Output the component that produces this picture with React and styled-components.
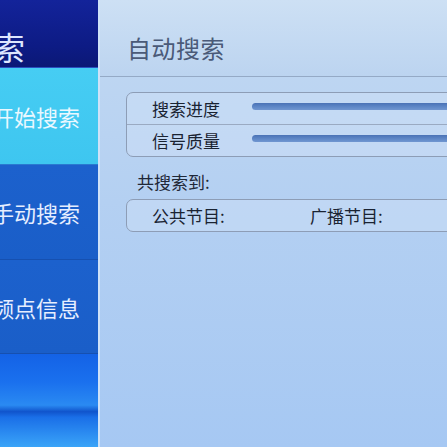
import React from 'react'
import styled, { createGlobalStyle } from 'styled-components'

const GlobalStyle = createGlobalStyle`
  html, body {
    margin: 0;
    padding: 0;
    background: #0e1c86;
  }
  body {
    font-family: 'Noto Sans CJK SC', 'Noto Sans', sans-serif;
  }
`

const Screen = styled.div`
  display: flex;
  width: 447px;
  height: 447px;
  overflow: hidden;
`

const Sidebar = styled.div`
  display: flex;
  flex-direction: column;
  width: 98px;
  flex-shrink: 0;
  overflow: hidden;
`

const SideHeader = styled.div`
  height: 68px;
  box-sizing: border-box;
  display: flex;
  align-items: center;
  justify-content: flex-end;
  padding: 24px 73px 0 0;
  background: linear-gradient(180deg, #13239a 0%, #0d1b84 70%, #0b1876 100%);
  border-bottom: 1px solid #2a4fc0;
  color: #dde6ff;
  font-size: 32px;
  white-space: nowrap;
`

const MenuItem = styled.div`
  height: ${({ $h }) => $h}px;
  display: flex;
  align-items: center;
  justify-content: flex-end;
  padding-right: 18px;
  font-size: 22px;
  white-space: nowrap;
  color: ${({ $active }) => ($active ? '#eaf8ff' : '#e6eeff')};
  background: ${({ $active }) =>
    $active
      ? 'linear-gradient(180deg, #46cdf3 0%, #3ec6f0 100%)'
      : 'linear-gradient(180deg, #1c61cd 0%, #1a5ec8 100%)'};
  border-bottom: 1px solid ${({ $active }) => ($active ? '#2a7ad0' : '#1650b0')};
`

const SideBottom = styled.div`
  flex: 1;
  background: linear-gradient(
    180deg,
    #1462e6 0%,
    #1a70ee 30%,
    #2a8af2 55%,
    #1054cc 62%,
    #1a6fe8 68%,
    #3aa4f8 100%
  );
`

const Main = styled.div`
  flex: 1;
  display: flex;
  flex-direction: column;
  border-left: 2px solid #cfe2f8;
  background: linear-gradient(180deg, #c3d9f2 0%, #b4d0f2 45%, #a6c8f3 100%);
  overflow: hidden;
`

const TitleBar = styled.div`
  height: 77px;
  box-sizing: border-box;
  display: flex;
  align-items: center;
  padding: 18px 0 0 27px;
  border-bottom: 1px solid #95aac6;
  background: linear-gradient(180deg, #cde0f4 0%, #bcd4f0 100%);
`

const Title = styled.div`
  font-size: 24px;
  color: #4a5a78;
  letter-spacing: 0.5px;
`

const Content = styled.div`
  display: flex;
  flex-direction: column;
  padding: 15px 0 0 26px;
  margin-right: -30px;
`

const Box = styled.div`
  border: 1px solid #8d9db6;
  border-radius: 7px;
  background: rgba(214, 230, 248, 0.35);
`

const Row = styled.div`
  height: 31px;
  display: flex;
  align-items: center;
  & + & {
    border-top: 1px solid #9aaac2;
  }
`

const Label = styled.div`
  width: ${({ $w }) => $w}px;
  flex-shrink: 0;
  padding-left: ${({ $pad }) => $pad ?? 25}px;
  box-sizing: border-box;
  font-size: 17px;
  color: #1a2332;
`

const Bar = styled.div`
  flex: 1;
  height: 7px;
  margin-top: -4px;
  border-radius: 4px 0 0 4px;
  background: linear-gradient(180deg, #4a72b6 0%, #6089c8 60%, #7196d0 100%);
`

const Summary = styled.div`
  height: 42px;
  display: flex;
  align-items: flex-end;
  padding: 0 0 5px 11px;
  box-sizing: border-box;
  font-size: 17px;
  color: #1f2838;
`

const App = () => {
  return (
    <>
      <GlobalStyle />
      <Screen>
        <Sidebar>
          <SideHeader>搜索</SideHeader>
          <MenuItem $active $h={96}>开始搜索</MenuItem>
          <MenuItem $h={94}>手动搜索</MenuItem>
          <MenuItem $h={93}>频点信息</MenuItem>
          <SideBottom />
        </Sidebar>
        <Main>
          <TitleBar>
            <Title>自动搜索</Title>
          </TitleBar>
          <Content>
            <Box>
              <Row>
                <Label $w={125}>搜索进度</Label>
                <Bar />
              </Row>
              <Row>
                <Label $w={125}>信号质量</Label>
                <Bar />
              </Row>
            </Box>
            <Summary>共搜索到:</Summary>
            <Box>
              <Row>
                <Label $w={183}>公共节目:</Label>
                <Label $w={140} $pad={0}>广播节目:</Label>
              </Row>
            </Box>
          </Content>
        </Main>
      </Screen>
    </>
  )
}

export default App
